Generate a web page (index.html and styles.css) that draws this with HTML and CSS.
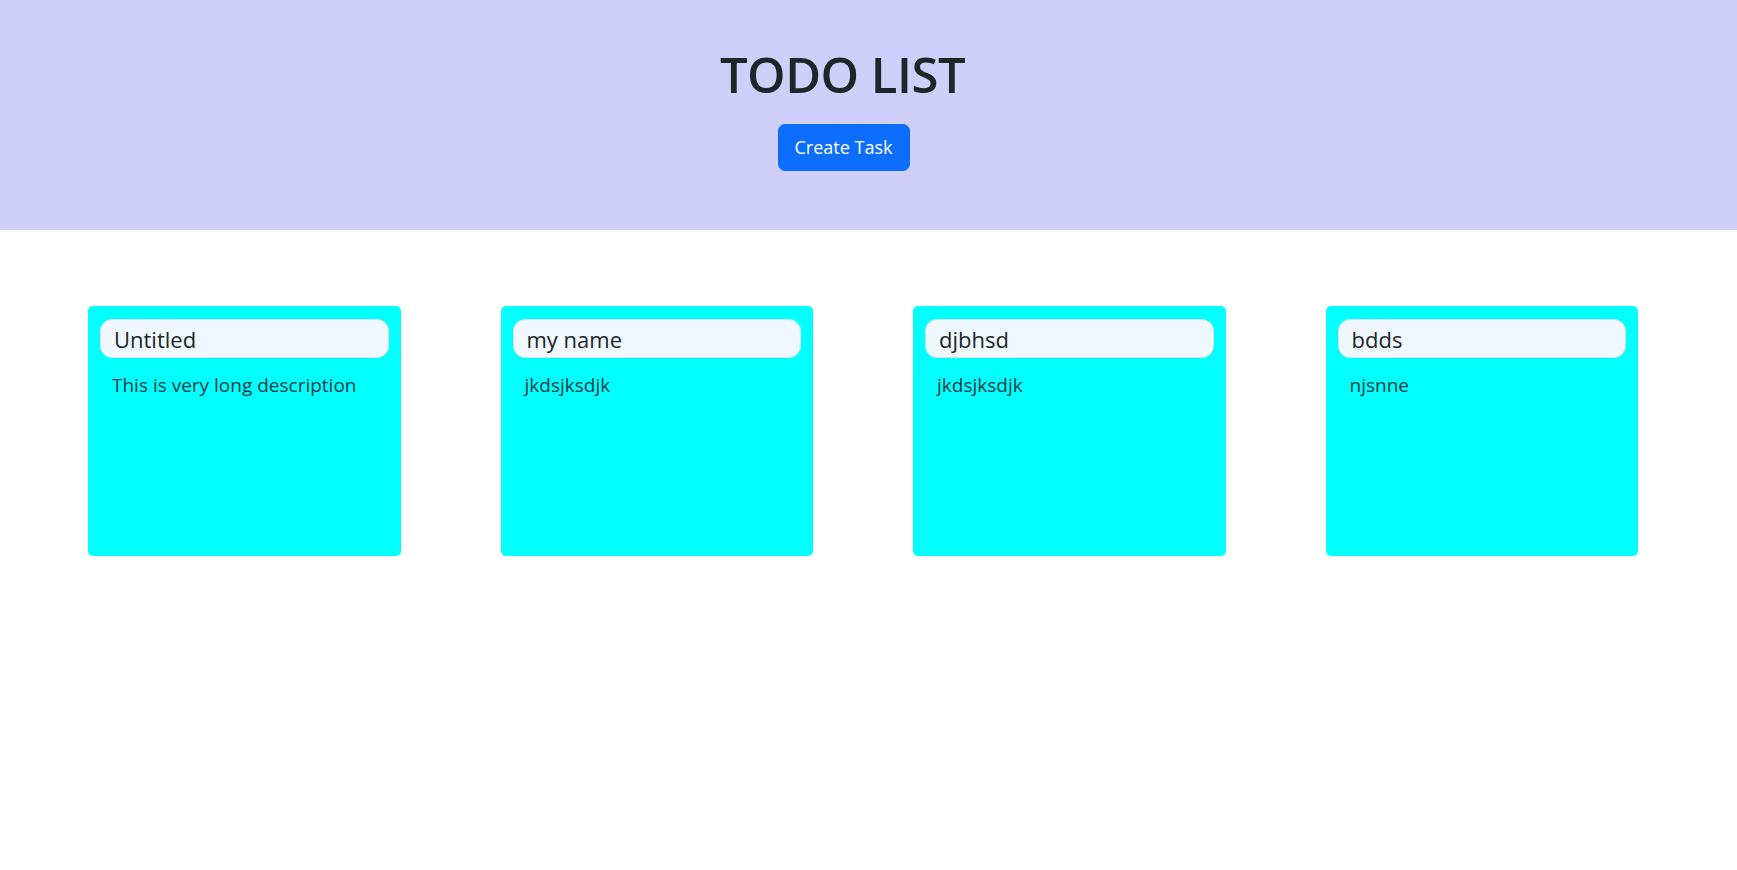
FILE: index.html
```html
<!DOCTYPE html>
<html lang="en">
<head>
<meta charset="utf-8">
<title>TODO LIST</title>
<link rel="stylesheet" href="styles.css">
</head>
<body>
<header class="hero">
  <h1 class="hero-title">TODO LIST</h1>
  <button class="btn-create" type="button">Create Task</button>
</header>
<main class="tasks">
  <div class="card">
    <div class="card-title">Untitled</div>
    <p class="card-desc">This is very long description</p>
  </div>
  <div class="card">
    <div class="card-title">my name</div>
    <p class="card-desc">jkdsjksdjk</p>
  </div>
  <div class="card">
    <div class="card-title">djbhsd</div>
    <p class="card-desc">jkdsjksdjk</p>
  </div>
  <div class="card">
    <div class="card-title">bdds</div>
    <p class="card-desc">njsnne</p>
  </div>
</main>
</body>
</html>
```

FILE: styles.css
```css
* { box-sizing: border-box; }
html, body {
  margin: 0;
  padding: 0;
  background: #ffffff;
  font-family: "Open Sans", "Noto Sans", sans-serif;
  color: #212529;
}
.hero {
  height: 230px;
  background: #d0cffa;
  display: flex;
  flex-direction: column;
  align-items: center;
  padding: 42px 50px 0 0;
}
.hero-title {
  margin: 0;
  font-size: 49px;
  font-weight: 600;
  line-height: 64px;
  letter-spacing: -0.5px;
  color: #212529;
  position: relative;
  left: -1px;
}
.btn-create {
  margin-top: 18px;
  height: 47px;
  width: 132px;
  padding: 0;
  background: #0d6efd;
  color: #ffffff;
  border: 1px solid #0d6efd;
  border-radius: 7px;
  font-family: "Open Sans", "Noto Sans", sans-serif;
  font-size: 18px;
  line-height: 45px;
}
.tasks {
  display: grid;
  grid-template-columns: repeat(4, 1fr);
  column-gap: 100px;
  padding: 76px 99px 0 88px;
}
.card {
  height: 250px;
  background: #00ffff;
  border-radius: 5px;
  padding: 13px 12px;
}
.card-title {
  height: 39px;
  background: #f0f8ff;
  border: 1px solid #d5dde3;
  border-radius: 12px;
  padding: 2px 13px 0;
  font-size: 22px;
  line-height: 35px;
  color: #212529;
}
.card-desc {
  margin: 14px 0 0 12px;
  font-size: 19px;
  line-height: 26px;
  color: #1d3b40;
}
```
